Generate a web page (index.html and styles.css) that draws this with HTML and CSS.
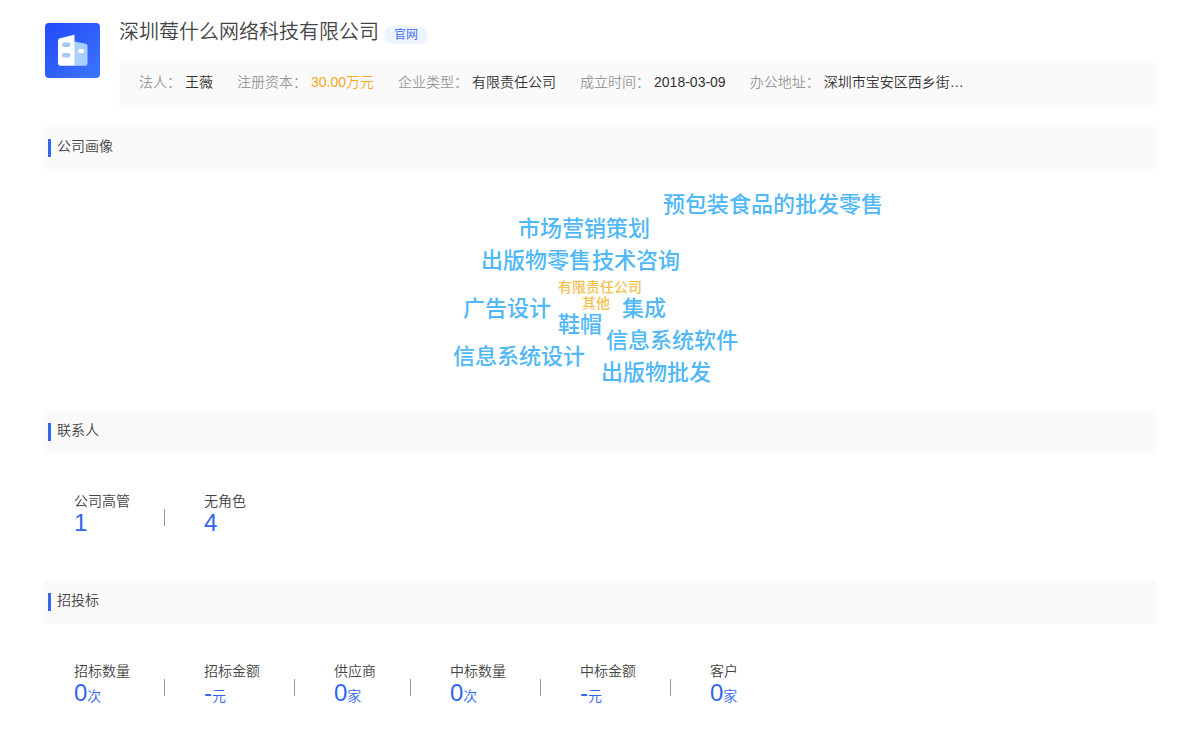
FILE: index.html
```html
<!DOCTYPE html>
<html lang="zh-CN">
<head>
<meta charset="utf-8">
<meta name="viewport" content="width=device-width, initial-scale=1">
<title>深圳莓什么网络科技有限公司</title>
<link rel="stylesheet" href="styles.css">
</head>
<body>
<main class="page">
  <header class="company">
    <svg class="company-logo" viewBox="0 0 55 55" aria-hidden="true">
      <defs>
        <linearGradient id="logo-bg" x1="0" y1="0" x2="1" y2="1">
          <stop offset="0" stop-color="#2348fb"/>
          <stop offset="1" stop-color="#3c76fb"/>
        </linearGradient>
      </defs>
      <rect width="55" height="55" rx="4" fill="url(#logo-bg)"/>
      <path d="M29 18.500L40.500 20.800Q42.500 21.300 42.500 23V40.500Q42.500 42.800 40.200 42.800H29Z" fill="#a9cffc"/>
      <path d="M15 15.200L29.500 11.800V42.800H15.500Q13 42.800 13 40.500V17.500Q13 15.700 15 15.200Z" fill="#fff"/>
      <rect x="17" y="19.500" width="8.500" height="4.500" rx="2.200" fill="#a3c6f8"/>
      <rect x="17" y="30" width="8.500" height="4.500" rx="2.200" fill="#a3c6f8"/>
      <rect x="33" y="26" width="6" height="4" rx="2" fill="#fff"/>
    </svg>
    <div class="company-body">
      <div class="company-title">
        <h1 class="company-name">深圳莓什么网络科技有限公司</h1>
        <a class="site-link" href="#">官网</a>
      </div>
      <dl class="facts">
        <div class="fact"><dt>法人：</dt><dd>王薇</dd></div>
        <div class="fact"><dt>注册资本：</dt><dd class="capital">30.00万元</dd></div>
        <div class="fact"><dt>企业类型：</dt><dd>有限责任公司</dd></div>
        <div class="fact"><dt>成立时间：</dt><dd>2018-03-09</dd></div>
        <div class="fact"><dt>办公地址：</dt><dd>深圳市宝安区西乡街…</dd></div>
      </dl>
    </div>
  </header>

  <section>
    <h2 class="section-title">公司画像</h2>
    <div class="cloud">
      <div class="cloud-canvas">
        <span class="word w1">预包装食品的批发零售</span>
        <span class="word w2">市场营销策划</span>
        <span class="word w3">出版物零售</span>
        <span class="word w4">技术咨询</span>
        <span class="word minor w5">有限责任公司</span>
        <span class="word minor w6">其他</span>
        <span class="word w7">广告设计</span>
        <span class="word w8">集成</span>
        <span class="word w9">鞋帽</span>
        <span class="word w10">信息系统软件</span>
        <span class="word w11">信息系统设计</span>
        <span class="word w12">出版物批发</span>
      </div>
    </div>
  </section>

  <section>
    <h2 class="section-title">联系人</h2>
    <dl class="stats">
      <div class="stat"><dt>公司高管</dt><dd>1</dd></div>
      <div class="stat"><dt>无角色</dt><dd>4</dd></div>
    </dl>
  </section>

  <section>
    <h2 class="section-title">招投标</h2>
    <dl class="stats">
      <div class="stat"><dt>招标数量</dt><dd>0<span class="unit">次</span></dd></div>
      <div class="stat"><dt>招标金额</dt><dd>-<span class="unit">元</span></dd></div>
      <div class="stat"><dt>供应商</dt><dd>0<span class="unit">家</span></dd></div>
      <div class="stat"><dt>中标数量</dt><dd>0<span class="unit">次</span></dd></div>
      <div class="stat"><dt>中标金额</dt><dd>-<span class="unit">元</span></dd></div>
      <div class="stat"><dt>客户</dt><dd>0<span class="unit">家</span></dd></div>
    </dl>
  </section>
</main>
</body>
</html>
```
FILE: styles.css
```css
* {
  box-sizing: border-box;
}

body {
  margin: 0;
  background: #fff;
  color: #444;
  font: 350 14px/20px "Liberation Sans", "Noto Sans CJK SC", sans-serif;
}

h1, h2, dl, dd {
  margin: 0;
  font-weight: inherit;
}

.page {
  padding: 16px 44px 0;
}

.company {
  display: flex;
  gap: 19px;
  padding-left: 1px;
  margin-bottom: 20px;
}

.company-logo {
  flex: none;
  width: 55px;
  height: 55px;
  margin-top: 7px;
}

.company-body {
  flex: 1;
  min-width: 0;
}

.company-title {
  display: flex;
  align-items: center;
  gap: 5px;
  margin-bottom: 14px;
}

.company-name {
  font-size: 20px;
  line-height: 32px;
}

.site-link {
  margin-top: 6px;
  padding: 0 10px;
  border-radius: 9px;
  background: #eef4ff;
  color: #3366ee;
  font-size: 12px;
  line-height: 18px;
  text-decoration: none;
}

.facts {
  display: flex;
  flex-wrap: wrap;
  column-gap: 24px;
  padding: 10px 20px 14px;
  background: #fafafa;
}

.fact {
  display: flex;
  gap: 4px;
}

.fact dt {
  color: #999;
}

.fact dd {
  color: #333;
}

.fact .capital {
  color: #f5a623;
}

.section-title {
  display: flex;
  align-items: flex-start;
  gap: 6px;
  padding: 10px 4px 13px;
  background: #fafafa;
  font-size: 14px;
  line-height: 20px;
}

.section-title::before {
  content: "";
  width: 3px;
  height: 18px;
  margin-top: 3px;
  background: #3366ee;
}

.cloud {
  display: flex;
  justify-content: center;
  padding: 20px 0;
}

.cloud-canvas {
  position: relative;
  width: 440px;
  height: 200px;
}

.word {
  position: absolute;
  color: #4fb8f5;
  font-size: 22px;
  font-weight: 500;
  line-height: 32px;
  white-space: nowrap;
}

.minor {
  color: #f5c04f;
  font-size: 14px;
  line-height: 20px;
}

.w1 { left: 283px; top: -1px; }
.w2 { left: 138px; top: 23px; }
.w3 { left: 101px; top: 55px; }
.w4 { left: 212px; top: 55px; }
.w5 { left: 178px; top: 87px; }
.w6 { left: 202px; top: 103px; }
.w7 { left: 83px; top: 103px; }
.w8 { left: 242px; top: 103px; }
.w9 { left: 178px; top: 119px; }
.w10 { left: 226px; top: 135px; }
.w11 { left: 73px; top: 151px; }
.w12 { left: 221px; top: 167px; }

.stats {
  display: flex;
  flex-wrap: wrap;
  padding: 37px 30px 45px;
}

.stat {
  display: flex;
  flex-direction: column;
  position: relative;
}

.stat + .stat {
  margin-left: 34px;
  padding-left: 40px;
}

.stat + .stat::before {
  content: "";
  position: absolute;
  left: 0;
  top: 18px;
  width: 1px;
  height: 17px;
  background: #999;
}

.stat dd {
  color: #3366ee;
  font-size: 24px;
  line-height: 24px;
}

.unit {
  font-size: 14px;
}
```
